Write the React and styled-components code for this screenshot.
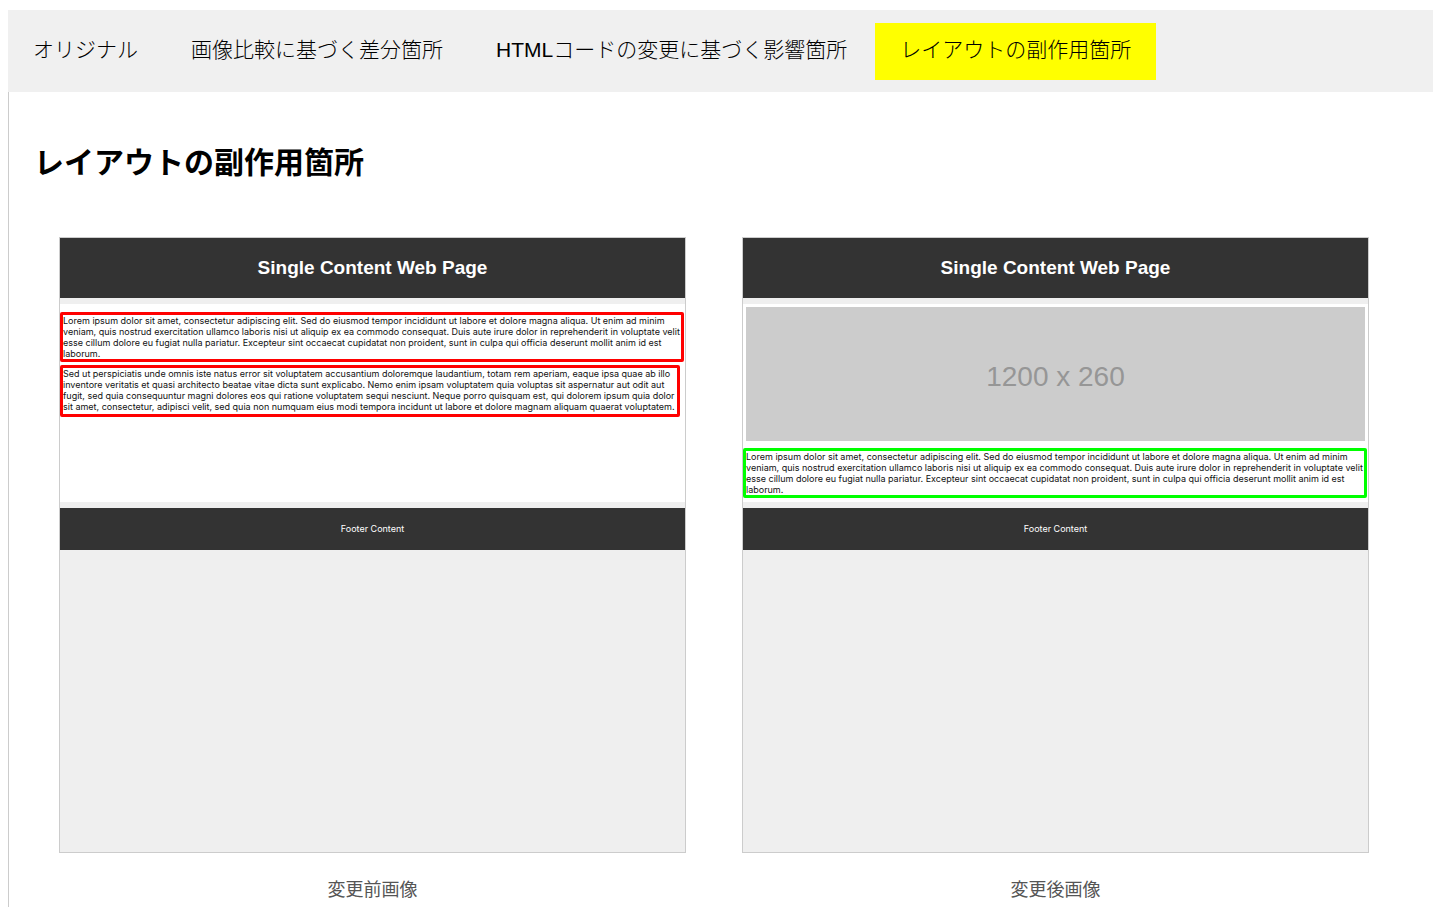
import React from 'react';
import styled, { createGlobalStyle } from 'styled-components';

const GlobalStyle = createGlobalStyle`
  * { box-sizing: border-box; }
  body {
    margin: 0;
    background: #fff;
    color: #000;
    font-family: "Liberation Sans", "Noto Sans CJK JP", sans-serif;
  }
`;

const Page = styled.div`
  padding: 10px 0 0 8px;
`;

const TabBar = styled.nav`
  display: flex;
  gap: 3px;
  padding: 13px 0 12px;
  background: #f0f0f0;
`;

const Tab = styled.button`
  height: 57px;
  padding: 0 25px 3px;
  border: 0;
  background: ${({ $active }) => ($active ? '#ff0' : 'transparent')};
  color: #000;
  font-family: inherit;
  font-size: 21px;
  font-weight: 300;
  line-height: 32px;
  white-space: nowrap;
  cursor: pointer;
`;

const Content = styled.main`
  padding: 49px 64px 24px 25px;
  border-left: 1px solid #ccc;
`;

const Title = styled.h1`
  margin: 0 0 52px;
  font-size: 30px;
  font-weight: 700;
  line-height: 44px;
`;

const Comparison = styled.div`
  display: grid;
  grid-template-columns: 1fr 1fr;
  gap: 56px;
  padding-left: 25px;
`;

const Figure = styled.figure`
  margin: 0;
  min-width: 0;
`;

const Caption = styled.figcaption`
  padding-top: 24px;
  color: #555;
  font-size: 18px;
  line-height: 26px;
  text-align: center;
`;

const Shot = styled.div`
  aspect-ratio: 627 / 616;
  overflow: hidden;
  border: 1px solid #ccc;
  background: #efefef;
`;

const ShotHeader = styled.div`
  height: 60px;
  background: #333;
  color: #fff;
  font-size: 19px;
  font-weight: 700;
  line-height: 60px;
  text-align: center;
`;

const ShotBody = styled.div`
  display: flex;
  flex-direction: column;
  align-items: flex-start;
  gap: ${({ $gap }) => $gap}px;
  height: 198px;
  margin: 6px 0;
  padding-top: ${({ $top }) => $top}px;
  background: #fff;
`;

const ShotFooter = styled.div`
  height: 42px;
  background: #333;
  color: #fff;
  font-family: Inter, "Liberation Sans", sans-serif;
  font-size: 9px;
  line-height: 42px;
  text-align: center;
`;

const Placeholder = styled.div`
  align-self: stretch;
  height: 134px;
  margin: 0 3px;
  padding-top: 6px;
  background: #ccc;
  color: #969696;
  font-size: 28px;
  line-height: 128px;
  text-align: center;
`;

const Marked = styled.p`
  width: ${({ $width }) => $width};
  height: ${({ $height }) => $height}px;
  margin: 0;
  border: 3px solid ${({ $color }) => $color};
  border-radius: 2px;
  color: #111;
  font-family: Inter, "Liberation Sans", sans-serif;
  font-size: 9px;
  line-height: 11px;
  white-space: nowrap;
`;

const Line = styled.span`
  display: block;
`;

const tabs = [
  'オリジナル',
  '画像比較に基づく差分箇所',
  'HTMLコードの変更に基づく影響箇所',
  'レイアウトの副作用箇所',
];

const lorem = [
  'Lorem ipsum dolor sit amet, consectetur adipiscing elit. Sed do eiusmod tempor incididunt ut labore et dolore magna aliqua. Ut enim ad minim',
  'veniam, quis nostrud exercitation ullamco laboris nisi ut aliquip ex ea commodo consequat. Duis aute irure dolor in reprehenderit in voluptate velit',
  'esse cillum dolore eu fugiat nulla pariatur. Excepteur sint occaecat cupidatat non proident, sunt in culpa qui officia deserunt mollit anim id est',
  'laborum.',
];

const perspiciatis = [
  'Sed ut perspiciatis unde omnis iste natus error sit voluptatem accusantium doloremque laudantium, totam rem aperiam, eaque ipsa quae ab illo',
  'inventore veritatis et quasi architecto beatae vitae dicta sunt explicabo. Nemo enim ipsam voluptatem quia voluptas sit aspernatur aut odit aut',
  'fugit, sed quia consequuntur magni dolores eos qui ratione voluptatem sequi nesciunt. Neque porro quisquam est, qui dolorem ipsum quia dolor',
  'sit amet, consectetur, adipisci velit, sed quia non numquam eius modi tempora incidunt ut labore et dolore magnam aliquam quaerat voluptatem.',
];

function MarkedText({ lines, color, width, height }) {
  return (
    <Marked $color={color} $width={width} $height={height}>
      {lines.map((line) => (
        <Line key={line}>{line}</Line>
      ))}
    </Marked>
  );
}

function Screenshot({ caption, top, gap, children }) {
  return (
    <Figure>
      <Shot>
        <ShotHeader>Single Content Web Page</ShotHeader>
        <ShotBody $top={top} $gap={gap}>{children}</ShotBody>
        <ShotFooter>Footer Content</ShotFooter>
      </Shot>
      <Caption>{caption}</Caption>
    </Figure>
  );
}

export default function App() {
  const [active, setActive] = React.useState(3);
  return (
    <Page lang="ja">
      <GlobalStyle />
      <TabBar>
        {tabs.map((label, i) => (
          <Tab key={label} type="button" $active={i === active} onClick={() => setActive(i)}>
            {label}
          </Tab>
        ))}
      </TabBar>
      <Content>
        <Title>{tabs[active]}</Title>
        <Comparison>
          <Screenshot caption="変更前画像" top={8} gap={3}>
            <MarkedText lines={lorem} color="#f00" width="calc(100% - 1px)" height={50} />
            <MarkedText lines={perspiciatis} color="#f00" width="calc(100% - 5px)" height={52} />
          </Screenshot>
          <Screenshot caption="変更後画像" top={3} gap={7}>
            <Placeholder>1200 x 260</Placeholder>
            <MarkedText lines={lorem} color="#0f0" width="calc(100% - 1px)" height={50} />
          </Screenshot>
        </Comparison>
      </Content>
    </Page>
  );
}
